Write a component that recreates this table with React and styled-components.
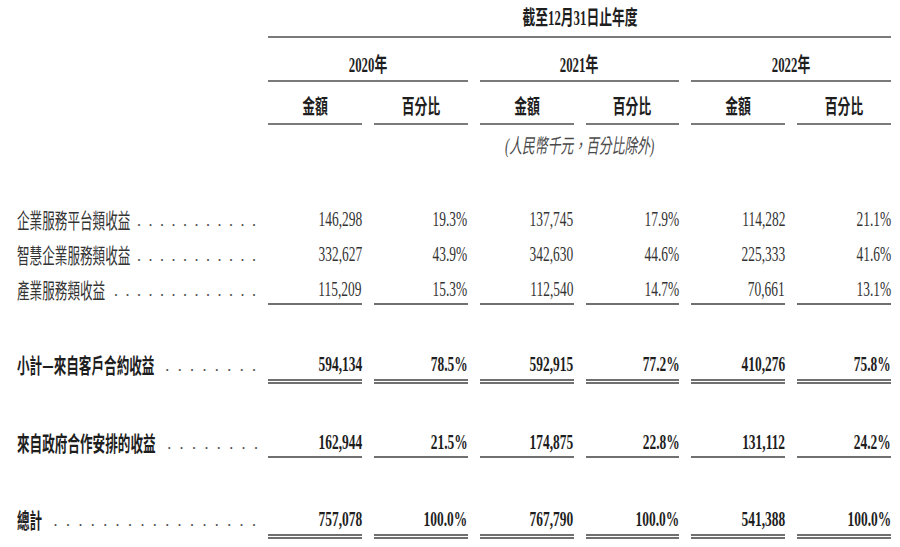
import styled, { createGlobalStyle } from "styled-components"

const GlobalStyle = createGlobalStyle`
  html, body {
    margin: 0;
    padding: 0;
    background: #ffffff;
  }
  body {
    font-family: "Liberation Serif", "Noto Sans CJK TC", serif;
    color: #222;
  }
`

const Page = styled.div`
  width: 891px;
  box-sizing: border-box;
  padding-left: 17px;
`

const Row = styled.div`
  display: grid;
  grid-template-columns: 239px repeat(6, minmax(0, 1fr));
  column-gap: 12px;
  margin-top: ${p => p.$mt || 0}px;
`

const Squeeze = styled.span`
  display: inline-block;
  white-space: nowrap;
  transform: scaleX(${p => p.$sx || 0.64});
  transform-origin: ${p => p.$origin || "center"};
`

const HeadCell = styled.div`
  grid-column: span ${p => p.$span};
  text-align: center;
  font-size: 20px;
  font-weight: 700;
  line-height: 24px;
  padding: ${p => p.$pad};
  border-bottom: 2px solid #7a7a7a;
  color: #1e1e1e;
`

const NoteCell = styled.div`
  grid-column: 2 / -1;
  text-align: center;
  font-family: "Liberation Serif", "Noto Sans CJK TC", serif;
  font-style: italic;
  font-size: 20px;
  line-height: 24px;
  padding-top: 9px;
  color: #4a4a4a;
`

const LabelCell = styled.div`
  display: grid;
  grid-template-rows: 24px;
  height: 24px;
  line-height: 24px;
`

const LabelText = styled.span`
  grid-area: 1 / 1;
  justify-self: start;
  align-self: center;
  z-index: 1;
  background: #ffffff;
  padding-right: 10px;
  font-family: "Noto Sans CJK TC", sans-serif;
  font-size: 21px;
  line-height: 24px;
  font-weight: ${p => (p.$bold ? 700 : 400)};
  color: ${p => (p.$bold ? "#1e1e1e" : "#333")};
  display: inline-block;
  white-space: nowrap;
  transform: scaleX(0.6);
  transform-origin: left;
`

const Leader = styled.span`
  grid-area: 1 / 1;
  align-self: end;
  display: flex;
  justify-content: flex-end;
  overflow: hidden;
  font-family: "Liberation Serif", serif;
  font-size: 16px;
  line-height: 20px;
  color: #4a4a4a;
`

const Dots = styled.span`
  white-space: nowrap;
  letter-spacing: ${p => (p.$bold ? 8.4 : 7.5)}px;
  margin-right: -${p => (p.$bold ? 8.4 : 7.5)}px;
`

const ValueCell = styled.div`
  text-align: right;
  font-size: 21px;
  line-height: 24px;
  font-weight: ${p => (p.$bold ? 700 : 400)};
  color: ${p => (p.$bold ? "#1e1e1e" : "#333")};
  padding-bottom: ${p => (p.$rule === "double" ? 3 : p.$rule === "single" ? 2 : 0)}px;
  border-bottom: ${p =>
    p.$rule === "double" ? "5px double #707070" : p.$rule === "single" ? "2px solid #707070" : "none"};
`

const rows = [
  { label: "企業服務平台類收益", vals: ["146,298", "19.3%", "137,745", "17.9%", "114,282", "21.1%"], mt: 49 },
  { label: "智慧企業服務類收益", vals: ["332,627", "43.9%", "342,630", "44.6%", "225,333", "41.6%"], mt: 11 },
  { label: "產業服務類收益", vals: ["115,209", "15.3%", "112,540", "14.7%", "70,661", "13.1%"], mt: 11, rule: "single" },
  { label: "小計—來自客戶合約收益", vals: ["594,134", "78.5%", "592,915", "77.2%", "410,276", "75.8%"], mt: 47, bold: true, rule: "double" },
  { label: "來自政府合作安排的收益", vals: ["162,944", "21.5%", "174,875", "22.8%", "131,112", "24.2%"], mt: 46, bold: true, rule: "single" },
  { label: "總計", vals: ["757,078", "100.0%", "767,790", "100.0%", "541,388", "100.0%"], mt: 49, bold: true, rule: "double" },
]

const years = ["2020年", "2021年", "2022年"]

const App = () => {
  return (
    <Page>
      <GlobalStyle />
      <Row>
        <div />
        <HeadCell $span={6} $pad="6px 0 6px">
          <Squeeze>截至12月31日止年度</Squeeze>
        </HeadCell>
      </Row>
      <Row>
        <div />
        {years.map(y => (
          <HeadCell key={y} $span={2} $pad="15px 0 3px">
            <Squeeze>{y}</Squeeze>
          </HeadCell>
        ))}
      </Row>
      <Row>
        <div />
        {years.map(y => [
          <HeadCell key={y + "a"} $span={1} $pad="13px 0 4px">
            <Squeeze>金額</Squeeze>
          </HeadCell>,
          <HeadCell key={y + "b"} $span={1} $pad="13px 0 4px">
            <Squeeze>百分比</Squeeze>
          </HeadCell>,
        ])}
      </Row>
      <Row>
        <div />
        <NoteCell>
          <Squeeze $sx={0.64}>(人民幣千元，百分比除外)</Squeeze>
        </NoteCell>
      </Row>
      {rows.map(r => (
        <Row key={r.label} $mt={r.mt}>
          <LabelCell>
            <LabelText $bold={r.bold}>{r.label}</LabelText>
            <Leader>
              <Dots $bold={r.bold}>{".".repeat(40)}</Dots>
            </Leader>
          </LabelCell>
          {r.vals.map((v, i) => (
            <ValueCell key={i} $bold={r.bold} $rule={r.rule}>
              <Squeeze $origin="right">{v}</Squeeze>
            </ValueCell>
          ))}
        </Row>
      ))}
    </Page>
  )
}

export default App
